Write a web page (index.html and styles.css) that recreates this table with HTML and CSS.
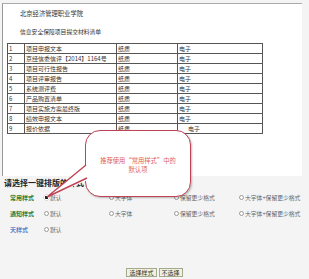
FILE: index.html
```html
<!DOCTYPE html>
<html lang="zh">
<head>
<meta charset="utf-8">
<link rel="stylesheet" href="styles.css">
</head>
<body>
<div class="doc">
  <p class="t1">北京经济管理职业学院</p>
  <p class="t2">信息安全保障项目提交材料清单</p>
  <table class="list">
    <colgroup><col class="c1"><col class="c2"><col class="c3"><col class="c4"></colgroup>
    <tr><td>1</td><td>项目申报文本</td><td>纸质</td><td>电子</td></tr>
    <tr><td>2</td><td>京经信委信评【2014】1164号</td><td>纸质</td><td>电子</td></tr>
    <tr><td>3</td><td>项目可行性报告</td><td>纸质</td><td>电子</td></tr>
    <tr><td>4</td><td>项目评审报告</td><td>纸质</td><td>电子</td></tr>
    <tr><td>5</td><td>系统测评费</td><td>纸质</td><td>电子</td></tr>
    <tr><td>6</td><td>产品购置清单</td><td>纸质</td><td>电子</td></tr>
    <tr><td>7</td><td>项目实施方案最终版</td><td>纸质</td><td>电子</td></tr>
    <tr><td>8</td><td>绩效申报文本</td><td>纸质</td><td>电子</td></tr>
    <tr><td>9</td><td>报价依据</td><td>纸质</td><td class="ind">电子</td></tr>
  </table>
</div>
<div class="pick">
  <h2 class="head">请选择一键排版的样式</h2>
  <div class="row">
    <span class="lbl green">常用样式</span>
    <span class="opt"><i class="radio on"></i>默认</span>
    <span class="opt"><i class="radio"></i>大字体</span>
    <span class="opt"><i class="radio"></i>保留更少格式</span>
    <span class="opt"><i class="radio"></i>大字体+保留更少格式</span>
  </div>
  <div class="row">
    <span class="lbl green">通知样式</span>
    <span class="opt"><i class="radio"></i>默认</span>
    <span class="opt"><i class="radio"></i>大字体</span>
    <span class="opt"><i class="radio"></i>保留更少格式</span>
    <span class="opt"><i class="radio"></i>大字体+保留更少格式</span>
  </div>
  <div class="row">
    <span class="lbl blue">天样式</span>
    <span class="opt"><i class="radio"></i>默认</span>
  </div>
  <div class="btns">
    <button class="btn">选择样式</button>
    <button class="btn">不选择</button>
  </div>
</div>
<div class="bubble"><span class="bl">推荐使用“常用样式”中的</span><span class="bl">默认项</span></div>
<svg class="tail" width="55" height="48" viewBox="0 0 55 48">
  <polygon points="48,9 7,42 48,25" fill="#fff"/>
  <polyline points="46,10 7,42 47,23" fill="none" stroke="#c04255" stroke-width="1.4" stroke-linejoin="miter"/>
</svg>
</body>
</html>
```
FILE: styles.css
```css
html, body {
  margin: 0;
  padding: 0;
}
body {
  width: 309px;
  height: 279px;
  background: #f4f4f4;
  font-family: "Noto Sans CJK SC", "Liberation Sans", sans-serif;
  position: relative;
  overflow: hidden;
}
.doc {
  box-sizing: border-box;
  margin: 3px 7px 0 2px;
  height: 173px;
  background: #fff;
  border-top: 1px solid #aaa;
  border-left: 1px solid #999;
  padding: 5px 0 0 4px;
}
.t1, .t2 {
  margin: 0 0 0 13px;
  font-size: 6.3px;
  line-height: 10px;
  color: #333;
  white-space: nowrap;
}
.t2 {
  margin-top: 8px;
  font-size: 5.8px;
}
.list {
  margin-top: 6px;
  border-collapse: collapse;
  width: 255px;
  table-layout: fixed;
}
.c1 { width: 17px; }
.c2 { width: 92px; }
.c3 { width: 61px; }
.c4 { width: 85px; }
.list td {
  border: 1px solid #555;
  height: 9px;
  padding: 0 1px;
  font-size: 6px;
  line-height: 9px;
  color: #333;
  white-space: nowrap;
  overflow: hidden;
}
.list td.ind {
  padding-left: 10px;
}
.head {
  margin: 1px 0 0 4px;
  font-size: 8px;
  line-height: 12px;
  font-weight: bold;
  color: #222;
}
.row {
  display: flex;
  align-items: center;
  height: 16px;
}
.lbl {
  box-sizing: border-box;
  width: 44px;
  padding-left: 10px;
  font-size: 6px;
  font-weight: bold;
}
.green { color: #2f7d33; }
.blue { color: #5a86c8; }
.opt {
  width: 65px;
  display: flex;
  align-items: center;
  gap: 1px;
  font-size: 5.8px;
  color: #666;
  white-space: nowrap;
}
.radio {
  box-sizing: border-box;
  display: inline-block;
  width: 5px;
  height: 5px;
  border: 1px solid #999;
  border-radius: 50%;
  background: #fff;
}
.radio.on {
  border: none;
  background: radial-gradient(circle, #222 0 1.6px, #fff 2px);
  box-shadow: 0 0 0 0.5px #bbb;
}
.btns {
  margin-top: 31px;
  display: flex;
  justify-content: center;
  gap: 2px;
}
.btn {
  box-sizing: border-box;
  height: 9px;
  margin: 0;
  padding: 0 2px;
  border: 1px solid #a3a98a;
  background: #eff2de;
  font-family: "Noto Sans CJK SC", sans-serif;
  font-size: 6px;
  line-height: 7px;
  color: #333;
}
.bubble {
  position: absolute;
  left: 85px;
  top: 130px;
  box-sizing: border-box;
  width: 106px;
  height: 67px;
  border: 1.5px solid #c04255;
  border-radius: 15px;
  background: #fff;
  box-shadow: 1px 1px 2px rgba(0,0,0,0.25);
  display: flex;
  flex-direction: column;
  align-items: center;
  justify-content: center;
  text-align: center;
  font-size: 6.3px;
  line-height: 9.5px;
  color: #e0605c;
  padding-top: 3px;
}
.bl {
  display: block;
  white-space: nowrap;
}
.tail {
  position: absolute;
  left: 40px;
  top: 155px;
}
```
